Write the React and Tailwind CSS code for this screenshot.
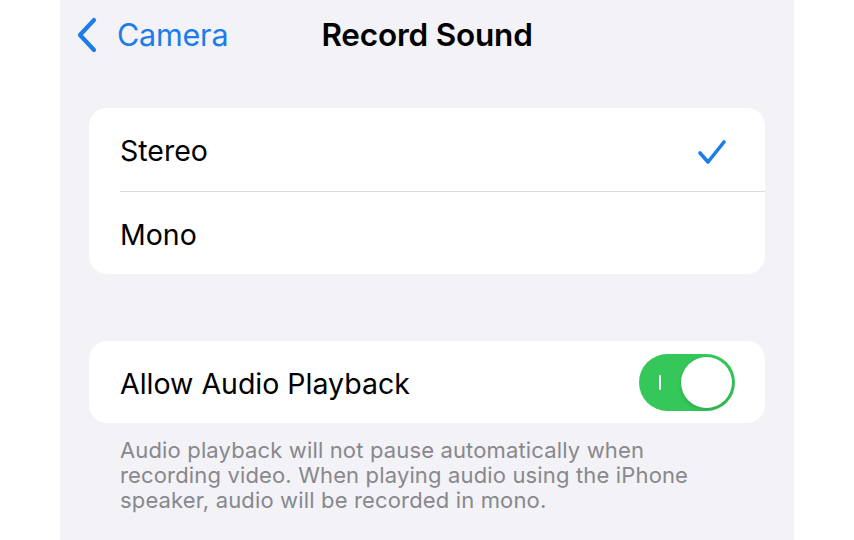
import React from 'react';

const font = { fontFamily: 'Inter, "Noto Sans", sans-serif' };

function Chevron() {
  return (
    <svg width="22" height="36" viewBox="0 0 22 36" fill="none">
      <path d="M18 3 L4 18 L18 33" stroke="#1b7cea" strokeWidth="4.2" strokeLinecap="round" strokeLinejoin="round" />
    </svg>
  );
}

function Check() {
  return (
    <svg width="30" height="28" viewBox="0 0 30 28" fill="none">
      <path d="M3 15 L11 24 L27 4" stroke="#1b7cea" strokeWidth="3.6" strokeLinecap="round" strokeLinejoin="round" />
    </svg>
  );
}

function Toggle() {
  return (
    <div className="w-[96px] h-[57px] rounded-full bg-[#35c759] flex items-center justify-between pl-[20px] pr-[3px]">
      <div className="w-[2px] h-[15px] bg-white rounded-full" />
      <div className="w-[51px] h-[51px] rounded-full bg-white shadow-[0_2px_4px_rgba(0,0,0,0.15)]" />
    </div>
  );
}

export default function App() {
  return (
    <div className="w-[854px] h-[540px] bg-white flex overflow-hidden" style={font}>
      <div className="ml-[60px] w-[734px] h-full bg-[#f2f2f7] flex flex-col">
        {/* Nav bar */}
        <div className="h-[70px] grid grid-cols-[1fr_auto_1fr] items-center">
          <div className="flex items-center pl-[16px] gap-[19px]">
            <Chevron />
            <span className="text-[30.5px] text-[#1b7cea] tracking-[-0.2px]">Camera</span>
          </div>
          <span className="text-[31.5px] font-semibold text-black tracking-[-0.2px]">Record Sound</span>
          <div />
        </div>

        {/* Sound options */}
        <div className="mt-[38px] mx-[29px] bg-white rounded-[18px]">
          <div className="h-[83px] flex items-center justify-between pl-[31px] pr-[38px] pt-[4px]">
            <span className="text-[28.5px] text-black">Stereo</span>
            <Check />
          </div>
          <div className="ml-[31px] h-px bg-[#dcdcdf]" />
          <div className="h-[82px] flex items-center pl-[31px] pt-[4px]">
            <span className="text-[28.5px] text-black">Mono</span>
          </div>
        </div>

        {/* Audio playback */}
        <div className="mt-[67px] mx-[29px] h-[82px] bg-white rounded-[18px] flex items-center justify-between pl-[31px] pr-[30px]">
          <span className="text-[28.5px] text-black pt-[4px]">Allow Audio Playback</span>
          <Toggle />
        </div>
        <p className="mt-[15px] px-[60px] text-[22px] leading-[25px] tracking-[0.15px] text-[#88888d] whitespace-nowrap">
          Audio playback will not pause automatically when
          <br />
          recording video. When playing audio using the iPhone
          <br />
          speaker, audio will be recorded in mono.
        </p>
      </div>
    </div>
  );
}
